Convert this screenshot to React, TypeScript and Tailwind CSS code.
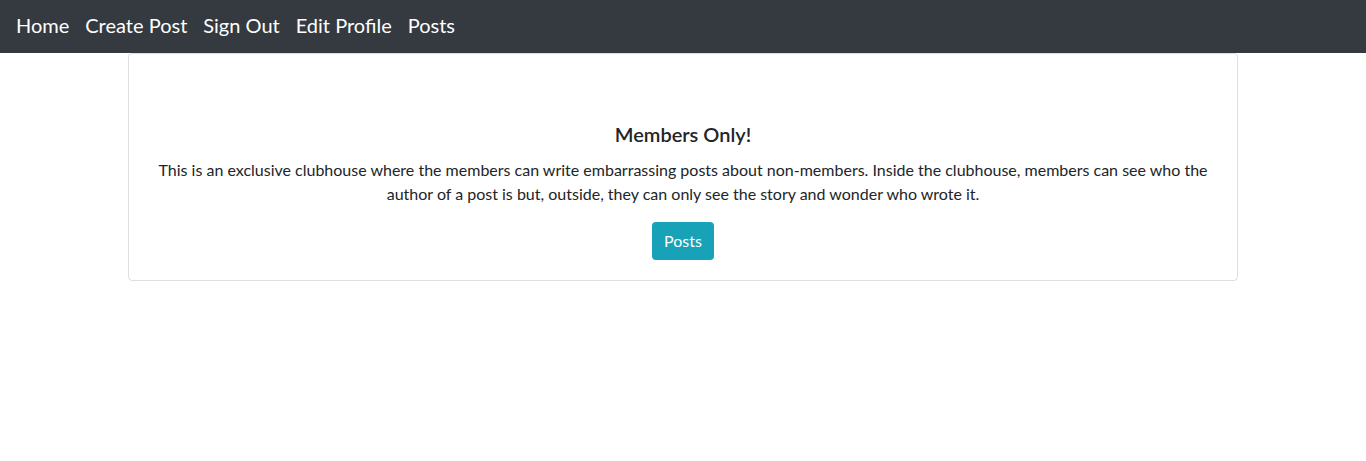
const links = ['Home', 'Create Post', 'Sign Out', 'Edit Profile', 'Posts']

export default function App() {
  return (
    <div className="min-h-[461px] bg-white text-[#212529] font-['Segoe_UI','Lato',sans-serif]">
      {/* navbar */}
      <nav className="flex h-[53px] items-center gap-4 bg-[#343a40] px-4 pb-1">
        {links.map(link => (
          <a key={link} href="#" className="text-[20px] leading-[30px] text-white">
            {link}
          </a>
        ))}
      </nav>

      <div className="mx-auto w-[1110px]">
        <div className="rounded border border-[rgba(0,0,0,0.125)] p-5 text-center">
          <h5 className="mt-[48px] mb-3 text-[20px] leading-[24px] font-semibold">Members Only!</h5>
          <p className="mb-4 text-[16px] leading-[24px]">
            This is an exclusive clubhouse where the members can write embarrassing posts about non-members. Inside the
            clubhouse, members can see who the author of a post is but, outside, they can only see the story and wonder who
            wrote it.
          </p>
          <button
            type="button"
            className="h-[38px] rounded bg-[#17a2b8] px-3 text-[16px] leading-[24px] text-white"
          >
            Posts
          </button>
        </div>
      </div>
    </div>
  )
}
